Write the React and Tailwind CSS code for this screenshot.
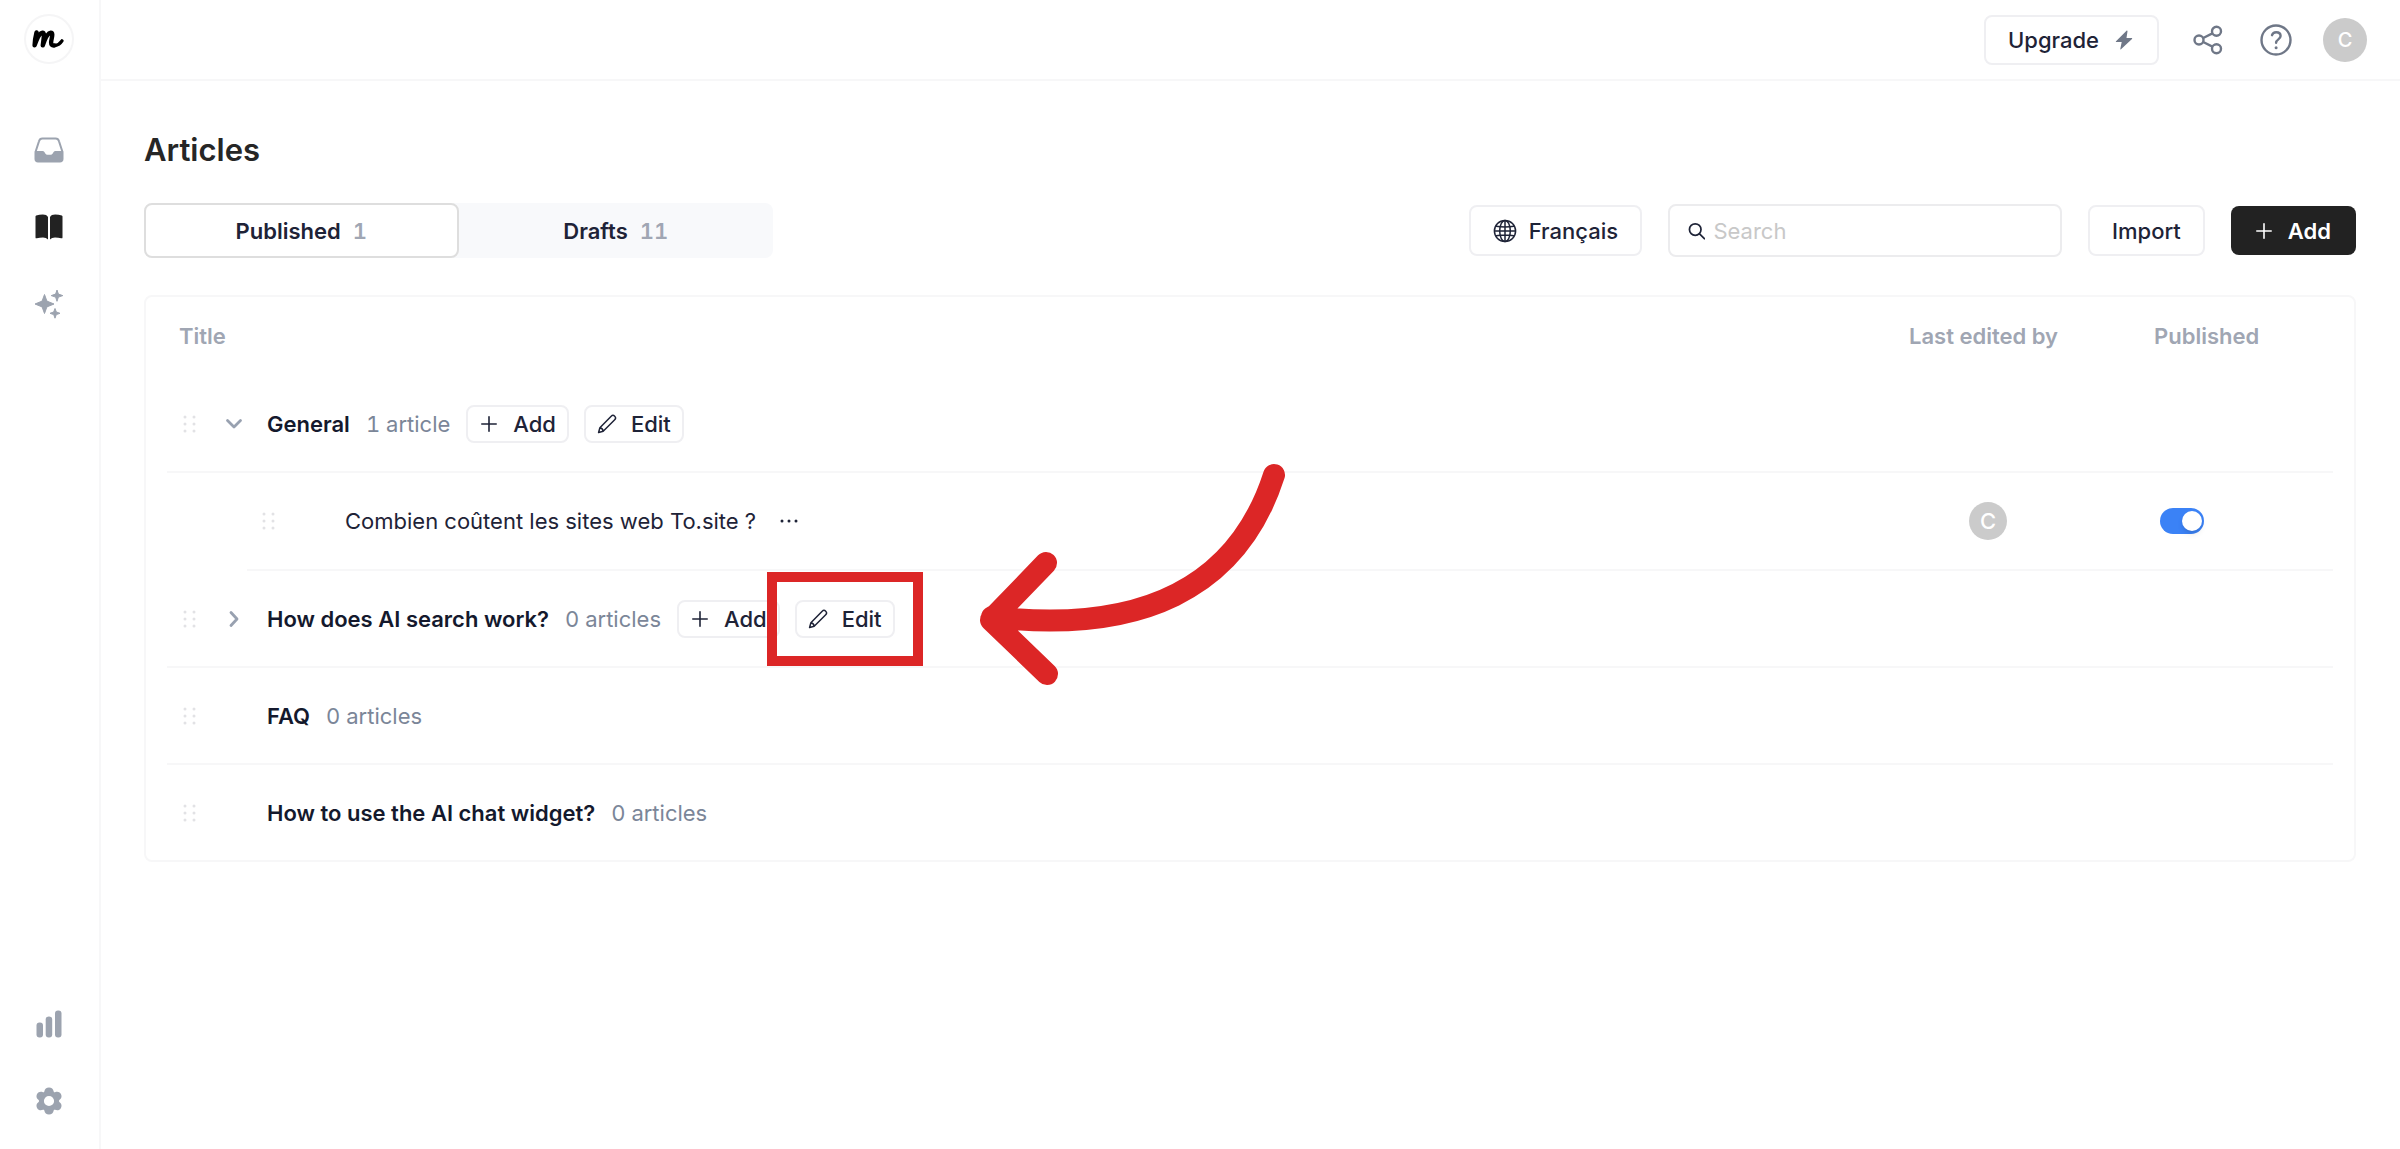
import React from "react";

const Svg = ({ children, className, viewBox = "0 0 24 24", ...rest }) => (
  <svg viewBox={viewBox} className={className} fill="none" aria-hidden="true" {...rest}>
    {children}
  </svg>
);

const Logo = () => (
  <Svg viewBox="0 0 32 18" className="h-[18px] w-8" stroke="currentColor" strokeLinecap="round" strokeLinejoin="round">
    <path strokeWidth="4.400" d="M4.500 2.500C3.600 6 2.800 10 2.600 15.400C4.600 9.500 7.600 3 10.400 2.700C13 2.600 11.600 8 10.800 15.400C12.800 9 15.800 3 18.800 2.700C21.600 2.700 19.600 8 19.200 11.500C18.800 14.600 20 15.800 22.600 15.400" />
    <path strokeWidth="3.200" d="M22.600 15.700C26 15 28.600 13 30 10.800" />
  </Svg>
);

const InboxIcon = () => (
  <Svg viewBox="0 0 30 26" className="h-[26px] w-[30px]">
    <path d="M1.500 15 5 4.200C5.500 2.400 6.600 1.500 8.400 1.500h13.200c1.800 0 2.900.9 3.400 2.700L28.500 15" stroke="currentColor" strokeWidth="2" />
    <path d="M.5 15.500C.5 14.500 1 14 2 14h6.600c.8 0 1.300.3 1.800 1l.9 1.500c.5.8 1.200 1.200 2.100 1.200h3.200c.9 0 1.600-.4 2.100-1.200l.9-1.500c.5-.7 1-1 1.800-1H28c1 0 1.500.5 1.500 1.500V22c0 2.200-1.300 3.500-3.500 3.500H4C1.800 25.500.5 24.200.5 22z" fill="currentColor" />
  </Svg>
);

const BookIcon = () => (
  <Svg viewBox="0 0 28 26" className="h-[26px] w-7">
    <path d="M13 3v22.500c-1.200-1.300-3-2-5-2-2.300 0-4.300.2-6.200.8-.8.200-1.300-.1-1.300-.9V2.500c0-.5.200-.8.700-1C3.300.8 5.500.5 7.800.5 10.300.5 12.200 1.300 13 3z" fill="currentColor" />
    <path d="M15 3v22.500c1.200-1.300 3-2 5-2 2.300 0 4.300.2 6.200.8.8.200 1.300-.1 1.300-.9V2.500c0-.5-.2-.8-.7-1C24.700.8 22.500.5 20.200.5 17.700.5 15.800 1.300 15 3z" fill="currentColor" />
  </Svg>
);

const SparklesIcon = () => (
  <Svg viewBox="0 0 30 30" className="h-[30px] w-[30px]" stroke="currentColor" strokeWidth="1" strokeLinejoin="round">
    <path fill="currentColor" d="M10.500 5.500 12.900 12.100 20 15 12.900 17.900 10.500 24.500 8.100 17.900 1 15 8.100 12.100z" />
    <path fill="currentColor" d="M23 1 24.400 5.100 28.800 6.600 24.400 8.100 23 12.300 21.600 8.100 17.200 6.600 21.600 5.100z" />
    <path fill="currentColor" d="M21 19.500 22.300 23 26 24.300 22.300 25.600 21 29.200 19.700 25.600 16 24.300 19.700 23z" />
  </Svg>
);

const BarsIcon = () => (
  <Svg viewBox="0 0 26 28" className="h-7 w-[26px]">
    <rect x="0.500" y="12.500" width="6.500" height="15" rx="3" fill="currentColor" />
    <rect x="9.700" y="6.500" width="6.500" height="21" rx="3" fill="currentColor" />
    <rect x="19" y="0.500" width="6.500" height="27" rx="3" fill="currentColor" />
  </Svg>
);

const CogIcon = () => (
  <Svg viewBox="0 0 26 28" className="h-7 w-[26px]">
    <path
      fill="currentColor"
      fillRule="evenodd"
      d="M13 .5c2.600 0 4.300 1.500 4.600 3.800l.3.800c.4.300.6.300 1.100.1 2.400-.9 4.600-.4 5.800 1.600 1.300 2.200.8 4.500-1.200 6-.8.6-.8 1.800 0 2.400 2 1.500 2.500 3.800 1.200 6-1.200 2-3.400 2.500-5.800 1.600-.5-.2-.7-.2-1.100.1l-.3.800c-.3 2.300-2 3.800-4.600 3.800s-4.300-1.500-4.600-3.800l-.3-.8c-.4-.3-.6-.3-1.100-.1-2.400.9-4.600.4-5.800-1.600-1.300-2.200-.8-4.500 1.200-6 .8-.6.8-1.800 0-2.400-2-1.500-2.500-3.800-1.200-6 1.200-2 3.400-2.500 5.800-1.600.5.200.7.200 1.100-.1l.3-.8C8.700 2 10.400.5 13 .5zM13 8.900a5.100 5.100 0 1 0 0 10.200 5.100 5.100 0 0 0 0-10.200z"
    />
  </Svg>
);

const BoltIcon = () => (
  <Svg viewBox="0 0 18 20" className="h-5 w-[18px]">
    <path d="M11.500.8 1 11.200c-.3.400-.2.800.3.800h5.400L5.300 19c-.1.500.3.700.7.300L17 9c.4-.4.200-.9-.3-.9h-5.200l1-6.800c.1-.6-.5-.9-1-.5z" fill="currentColor" />
  </Svg>
);

const ShareIcon = () => (
  <Svg viewBox="0 0 30 30" className="h-[30px] w-[30px]" stroke="currentColor" strokeWidth="2.400">
    <circle cx="6" cy="15" r="4.500" />
    <circle cx="23.500" cy="6.300" r="4.500" />
    <circle cx="23.500" cy="23.700" r="4.500" />
    <path d="m10.200 13 9.200-4.600M10.200 17l9.200 4.600" />
  </Svg>
);

const HelpIcon = () => (
  <Svg viewBox="0 0 32 32" className="h-8 w-8" stroke="currentColor" strokeWidth="2.400" strokeLinecap="round">
    <circle cx="16" cy="16" r="14.500" />
    <path d="M12 11.200c.6-2 2.200-3 4.200-3 2.600 0 4.400 1.600 4.400 3.900 0 3.200-4.500 3.300-4.500 6.600" />
    <circle cx="16.100" cy="23.700" r="1.500" fill="currentColor" stroke="none" />
  </Svg>
);

const GlobeIcon = () => (
  <Svg viewBox="0 0 24 24" className="h-6 w-6" stroke="currentColor" strokeWidth="1.500">
    <circle cx="12" cy="12" r="10.600" />
    <ellipse cx="12" cy="12" rx="5.300" ry="10.600" />
    <path d="M12 1.400v21.200M1.400 12h21.200M3 7.300c5.500 1 12.500 1 18 0M3 16.700c5.500-1 12.500-1 18 0" />
  </Svg>
);

const SearchIcon = () => (
  <Svg viewBox="0 0 18 18" className="h-[18px] w-[18px]" stroke="currentColor" strokeWidth="1.800" strokeLinecap="round">
    <circle cx="7.500" cy="7.500" r="6" />
    <path d="m12 12 5 5" />
  </Svg>
);

const PlusIcon = () => (
  <Svg viewBox="0 0 16 16" className="h-4 w-4" stroke="currentColor" strokeWidth="1.600" strokeLinecap="round">
    <path d="M8 .8v14.400M.8 8h14.400" />
  </Svg>
);

const PencilIcon = () => (
  <Svg viewBox="0 0 20 20" className="h-5 w-5" stroke="currentColor" strokeWidth="1.500" strokeLinejoin="round">
    <path d="M14.200 2.200a2.400 2.400 0 0 1 3.500 3.500L6.200 17.200 1.600 18.500 2.900 13.800zM3 13.800c1.600.3 2.900 1.600 3.200 3.300" />
  </Svg>
);

const Chevron = ({ open }) => (
  <Svg viewBox="0 0 18 18" className="h-[18px] w-[18px]" stroke="currentColor" strokeWidth="2.800" strokeLinecap="round" strokeLinejoin="round">
    <path d={open ? "M2.500 5.500 9 12l6.500-6.500" : "M6 2.500l6 6.500-6 6.500"} />
  </Svg>
);

const Handle = () => (
  <Svg viewBox="0 0 14 18" className="h-[18px] w-[14px] shrink-0 text-[#e2e2e5]">
    {[2, 9, 16].map((y) => (
      <React.Fragment key={y}>
        <circle cx="2" cy={y} r="1.500" fill="currentColor" />
        <circle cx="11" cy={y} r="1.500" fill="currentColor" />
      </React.Fragment>
    ))}
  </Svg>
);

const SmallButton = ({ icon, children }) => (
  <button type="button" className="flex h-[38px] items-center gap-[14px] rounded-lg border-2 border-[#efeff2] bg-white px-[11px] font-medium text-[#1e2337]">
    <span className="flex w-5 justify-center">{icon}</span>
    {children}
  </button>
);

const Callout = () => (
  <>
    <span className="pointer-events-none absolute -inset-7 border-10 border-[#dc2626]" />
    <Svg viewBox="980 460 308 228" className="pointer-events-none absolute -top-[140px] left-[184px] h-[228px] w-[308px] max-w-none" stroke="#dc2626" strokeWidth="22" strokeLinecap="round" strokeLinejoin="round">
      <path d="M1047 563 992 620 1048 674M993 617C1140 634 1238 590 1275 475" />
    </Svg>
  </>
);

const sections = [
  { title: "General", count: "1 article", state: "open", actions: true },
  { article: "Combien coûtent les sites web To.site ?" },
  { title: "How does AI search work?", count: "0 articles", state: "closed", actions: true, marked: true },
  { title: "FAQ", count: "0 articles" },
  { title: "How to use the AI chat widget?", count: "0 articles" },
];

const SectionRow = ({ row, last }) => (
  <tr>
    <td colSpan={3}>
      <div className={"flex items-center pl-4 " + (last ? "h-[95px]" : "h-[97px] border-b-2 border-[#f7f7f8]")}>
        <Handle />
        <span className="ml-[26px] mr-[22px] flex w-[22px] shrink-0 justify-center text-[#98a1b0]">
          {row.state && (
            <button type="button" aria-label={"Toggle " + row.title} className="flex">
              <Chevron open={row.state === "open"} />
            </button>
          )}
        </span>
        <span className="font-semibold text-[#14192d]">{row.title}</span>
        <span className="ml-4 tabular-nums text-[#7b8698]">{row.count}</span>
        {row.actions && (
          <div className="ml-4 flex gap-[15px]">
            <SmallButton icon={<PlusIcon />}>Add</SmallButton>
            <div className="relative">
              <SmallButton icon={<PencilIcon />}>Edit</SmallButton>
              {row.marked && <Callout />}
            </div>
          </div>
        )}
      </div>
    </td>
  </tr>
);

const ArticleRow = ({ row }) => (
  <tr>
    <td className="pl-20">
      <div className="flex h-[98px] items-center border-b-2 border-[#f7f7f8] pl-[15px]">
        <Handle />
        <span className="ml-[69px] text-[#1e2337]">{row.article}</span>
        <button type="button" aria-label="More" className="ml-6 flex text-[#1e2337]">
          <Svg viewBox="0 0 18 4" className="h-1 w-[18px]">
            <circle cx="2" cy="2" r="1.500" fill="currentColor" />
            <circle cx="9" cy="2" r="1.500" fill="currentColor" />
            <circle cx="16" cy="2" r="1.500" fill="currentColor" />
          </Svg>
        </button>
      </div>
    </td>
    <td>
      <div className="flex h-[98px] items-center border-b-2 border-[#f7f7f8] pl-[72px]">
        <span className="flex size-[38px] items-center justify-center rounded-full bg-[#cbcbcb] text-[22px] font-medium text-white">C</span>
      </div>
    </td>
    <td>
      <div className="flex h-[98px] items-center border-b-2 border-[#f7f7f8] pl-[18px]">
        <label className="relative flex h-[26px] w-[44px] cursor-pointer">
          <input type="checkbox" role="switch" defaultChecked aria-label="Published" className="peer h-[26px] w-[44px] appearance-none rounded-full bg-gray-300 checked:bg-[#3b82f6]" />
          <span className="absolute left-[3px] top-[3px] size-5 rounded-full bg-white shadow-md peer-checked:left-[22px]" />
        </label>
      </div>
    </td>
  </tr>
);

const navLink = "flex h-[30px] items-center text-[#9ca3af]";

export default function App() {
  return (
    <div className="flex min-h-screen bg-white font-['Inter',sans-serif] text-[22px] leading-8 text-[#1e2337]">
      <nav className="flex w-[101px] shrink-0 flex-col items-center border-r-2 border-[#f7f7f8] pb-[33px] pr-0.5 pt-[14px]">
        <a href="#home" aria-label="Home" className="flex size-[50px] items-center justify-center rounded-full border-2 border-[#f5f5f6] pr-0.5 text-black">
          <Logo />
        </a>
        <div className="mt-[71px] flex flex-col items-center gap-[47px]">
          <a href="#inbox" aria-label="Inbox" className={navLink}><InboxIcon /></a>
          <a href="#articles" aria-label="Articles" className="flex h-[30px] items-center text-[#222222]"><BookIcon /></a>
          <a href="#ai" aria-label="AI" className={navLink}><SparklesIcon /></a>
        </div>
        <div className="mt-auto flex flex-col items-center gap-[47px]">
          <a href="#analytics" aria-label="Analytics" className={navLink}><BarsIcon /></a>
          <a href="#settings" aria-label="Settings" className={navLink}><CogIcon /></a>
        </div>
      </nav>

      <div className="flex min-w-0 grow flex-col">
        <header className="flex h-[81px] items-center justify-end border-b-2 border-[#f7f7f8] pr-[33px]">
          <button type="button" className="flex h-[50px] items-center gap-4 rounded-lg border-2 border-[#efeff2] px-[22px] font-medium">
            Upgrade
            <span className="flex w-5 text-[#6f7787]"><BoltIcon /></span>
          </button>
          <button type="button" aria-label="Share" className="ml-[34px] text-[#6f7787]"><ShareIcon /></button>
          <button type="button" aria-label="Help" className="ml-[37px] text-[#6f7787]"><HelpIcon /></button>
          <button type="button" aria-label="Account" className="ml-[31px] size-11 rounded-full bg-[#cbcbcb] text-xl font-medium text-white">C</button>
        </header>

        <main className="pl-[43px] pr-11 pt-[49px]">
          <h1 className="text-[31px] font-semibold leading-10 text-[#262626]">Articles</h1>

          <div className="mt-[33px] flex items-center justify-between">
            <div className="grid h-[55px] w-[629px] grid-cols-2 rounded-lg bg-[#f8f9fb]" role="tablist">
              <button type="button" role="tab" aria-selected="true" className="flex items-center justify-center gap-3 rounded-lg border-2 border-[#dedede] bg-white font-semibold text-[#1e2337]">
                Published <span className="tabular-nums text-[#a0a6b3]">1</span>
              </button>
              <button type="button" role="tab" aria-selected="false" className="flex items-center justify-center gap-3 font-semibold text-[#1e2337]">
                Drafts <span className="tabular-nums text-[#a0a6b3]">11</span>
              </button>
            </div>
            <div className="flex items-center gap-[26px]">
              <button type="button" className="flex h-[51px] items-center gap-3 rounded-lg border-2 border-[#efeff2] px-[22px] font-medium">
                <GlobeIcon />
                Français
              </button>
              <label className="flex h-[53px] w-[394px] items-center gap-2 rounded-lg border-2 border-[#ececee] px-[18px]">
                <SearchIcon />
                <input type="search" aria-label="Search" placeholder="Search" className="min-w-0 grow outline-none placeholder:text-[#c8c8c8]" />
              </label>
              <button type="button" className="h-[51px] rounded-lg border-2 border-[#efeff2] px-[22px] font-medium">Import</button>
              <button type="button" className="flex h-[49px] items-center gap-4 rounded-lg bg-[#222222] px-[25px] font-semibold text-white">
                <PlusIcon />
                Add
              </button>
            </div>
          </div>

          <div className="mt-[37px] rounded-lg border-2 border-[#f7f7f8] px-[21px]">
            <table className="w-full table-fixed border-separate border-spacing-0">
              <colgroup>
                <col />
                <col className="w-[245px]" />
                <col className="w-[191px]" />
              </colgroup>
              <thead>
                <tr className="h-[79px] text-left text-[#a0a6b3]">
                  <th className="pb-0.5 pl-3 font-semibold">Title</th>
                  <th className="pb-0.5 pl-3 font-semibold">Last edited by</th>
                  <th className="pb-0.5 pl-3 font-semibold">Published</th>
                </tr>
              </thead>
              <tbody>
                {sections.map((row, i) =>
                  row.article ? (
                    <ArticleRow key={row.article} row={row} />
                  ) : (
                    <SectionRow key={row.title} row={row} last={i === sections.length - 1} />
                  )
                )}
              </tbody>
            </table>
          </div>
        </main>
      </div>
    </div>
  );
}
